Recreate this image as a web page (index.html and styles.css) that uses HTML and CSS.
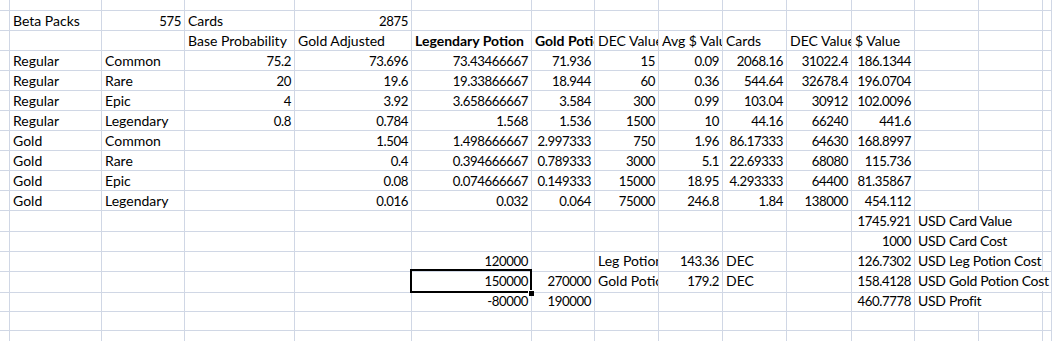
FILE: index.html
```html
<!DOCTYPE html>
<html>
<head>
<meta charset="utf-8">
<link rel="stylesheet" href="styles.css">
</head>
<body>
<div class="sheet">
  <div class="r top"><div class="c"></div><div class="c"></div><div class="c"></div><div class="c"></div><div class="c"></div><div class="c"></div><div class="c"></div><div class="c"></div><div class="c"></div><div class="c"></div><div class="c"></div><div class="c"></div><div class="c"></div><div class="c"></div><div class="c"></div></div>
  <div class="r"><div class="c"></div><div class="c">Beta Packs</div><div class="c n">575</div><div class="c">Cards</div><div class="c n">2875</div><div class="c"></div><div class="c"></div><div class="c"></div><div class="c"></div><div class="c"></div><div class="c"></div><div class="c"></div><div class="c"></div><div class="c"></div><div class="c"></div></div>
  <div class="r"><div class="c"></div><div class="c"></div><div class="c"></div><div class="c">Base Probability</div><div class="c">Gold Adjusted</div><div class="c b">Legendary Potion</div><div class="c b">Gold Potion</div><div class="c">DEC Value</div><div class="c">Avg $ Value</div><div class="c">Cards</div><div class="c">DEC Value</div><div class="c">$ Value</div><div class="c"></div><div class="c"></div><div class="c"></div></div>
  <div class="r"><div class="c"></div><div class="c">Regular</div><div class="c">Common</div><div class="c n">75.2</div><div class="c n">73.696</div><div class="c n">73.43466667</div><div class="c n">71.936</div><div class="c n">15</div><div class="c n">0.09</div><div class="c n">2068.16</div><div class="c n">31022.4</div><div class="c n">186.1344</div><div class="c"></div><div class="c"></div><div class="c"></div></div>
  <div class="r"><div class="c"></div><div class="c">Regular</div><div class="c">Rare</div><div class="c n">20</div><div class="c n">19.6</div><div class="c n">19.33866667</div><div class="c n">18.944</div><div class="c n">60</div><div class="c n">0.36</div><div class="c n">544.64</div><div class="c n">32678.4</div><div class="c n">196.0704</div><div class="c"></div><div class="c"></div><div class="c"></div></div>
  <div class="r"><div class="c"></div><div class="c">Regular</div><div class="c">Epic</div><div class="c n">4</div><div class="c n">3.92</div><div class="c n">3.658666667</div><div class="c n">3.584</div><div class="c n">300</div><div class="c n">0.99</div><div class="c n">103.04</div><div class="c n">30912</div><div class="c n">102.0096</div><div class="c"></div><div class="c"></div><div class="c"></div></div>
  <div class="r"><div class="c"></div><div class="c">Regular</div><div class="c">Legendary</div><div class="c n">0.8</div><div class="c n">0.784</div><div class="c n">1.568</div><div class="c n">1.536</div><div class="c n">1500</div><div class="c n">10</div><div class="c n">44.16</div><div class="c n">66240</div><div class="c n">441.6</div><div class="c"></div><div class="c"></div><div class="c"></div></div>
  <div class="r"><div class="c"></div><div class="c">Gold</div><div class="c">Common</div><div class="c"></div><div class="c n">1.504</div><div class="c n">1.498666667</div><div class="c n">2.997333</div><div class="c n">750</div><div class="c n">1.96</div><div class="c n">86.17333</div><div class="c n">64630</div><div class="c n">168.8997</div><div class="c"></div><div class="c"></div><div class="c"></div></div>
  <div class="r"><div class="c"></div><div class="c">Gold</div><div class="c">Rare</div><div class="c"></div><div class="c n">0.4</div><div class="c n">0.394666667</div><div class="c n">0.789333</div><div class="c n">3000</div><div class="c n">5.1</div><div class="c n">22.69333</div><div class="c n">68080</div><div class="c n">115.736</div><div class="c"></div><div class="c"></div><div class="c"></div></div>
  <div class="r"><div class="c"></div><div class="c">Gold</div><div class="c">Epic</div><div class="c"></div><div class="c n">0.08</div><div class="c n">0.074666667</div><div class="c n">0.149333</div><div class="c n">15000</div><div class="c n">18.95</div><div class="c n">4.293333</div><div class="c n">64400</div><div class="c n">81.35867</div><div class="c"></div><div class="c"></div><div class="c"></div></div>
  <div class="r"><div class="c"></div><div class="c">Gold</div><div class="c">Legendary</div><div class="c"></div><div class="c n">0.016</div><div class="c n">0.032</div><div class="c n">0.064</div><div class="c n">75000</div><div class="c n">246.8</div><div class="c n">1.84</div><div class="c n">138000</div><div class="c n">454.112</div><div class="c"></div><div class="c"></div><div class="c"></div></div>
  <div class="r"><div class="c"></div><div class="c"></div><div class="c"></div><div class="c"></div><div class="c"></div><div class="c"></div><div class="c"></div><div class="c"></div><div class="c"></div><div class="c"></div><div class="c"></div><div class="c n">1745.921</div><div class="c ov">USD Card Value</div><div class="c"></div><div class="c"></div></div>
  <div class="r"><div class="c"></div><div class="c"></div><div class="c"></div><div class="c"></div><div class="c"></div><div class="c"></div><div class="c"></div><div class="c"></div><div class="c"></div><div class="c"></div><div class="c"></div><div class="c n">1000</div><div class="c ov">USD Card Cost</div><div class="c"></div><div class="c"></div></div>
  <div class="r"><div class="c"></div><div class="c"></div><div class="c"></div><div class="c"></div><div class="c"></div><div class="c n">120000</div><div class="c"></div><div class="c">Leg Potion</div><div class="c n">143.36</div><div class="c">DEC</div><div class="c"></div><div class="c n">126.7302</div><div class="c ov">USD Leg Potion Cost</div><div class="c"></div><div class="c"></div></div>
  <div class="r"><div class="c"></div><div class="c"></div><div class="c"></div><div class="c"></div><div class="c"></div><div class="c n sel">150000</div><div class="c n">270000</div><div class="c">Gold Potion</div><div class="c n">179.2</div><div class="c">DEC</div><div class="c"></div><div class="c n">158.4128</div><div class="c ov">USD Gold Potion Cost</div><div class="c nr"></div><div class="c"></div></div>
  <div class="r"><div class="c"></div><div class="c"></div><div class="c"></div><div class="c"></div><div class="c"></div><div class="c n">-80000</div><div class="c n">190000</div><div class="c"></div><div class="c"></div><div class="c"></div><div class="c"></div><div class="c n">460.7778</div><div class="c ov">USD Profit</div><div class="c"></div><div class="c"></div></div>
  <div class="r"><div class="c"></div><div class="c"></div><div class="c"></div><div class="c"></div><div class="c"></div><div class="c"></div><div class="c"></div><div class="c"></div><div class="c"></div><div class="c"></div><div class="c"></div><div class="c"></div><div class="c"></div><div class="c"></div><div class="c"></div></div>
  <div class="r"><div class="c"></div><div class="c"></div><div class="c"></div><div class="c"></div><div class="c"></div><div class="c"></div><div class="c"></div><div class="c"></div><div class="c"></div><div class="c"></div><div class="c"></div><div class="c"></div><div class="c"></div><div class="c"></div><div class="c"></div></div>
</div>
</body>
</html>
```
FILE: styles.css
```css
html, body {
  margin: 0;
  padding: 0;
  background: #ffffff;
  overflow: hidden;
}
.sheet {
  width: 1052px;
  height: 341px;
  overflow: hidden;
  font-family: Lato, "Liberation Sans", sans-serif;
  font-size: 14px;
  color: #000000;
}
.r {
  display: grid;
  grid-template-columns: 10px 92px 83px 110px 117px 120px 63px 64px 64px 64px 65px 63px 64px 64px 1fr;
  height: 20px;
}
.r.top {
  height: 11px;
}
.c {
  box-sizing: border-box;
  border-right: 1px solid #d0d7e5;
  border-bottom: 1px solid #d0d7e5;
  padding: 0 2px 0 3px;
  line-height: 20px;
  white-space: nowrap;
  overflow: hidden;
}
.n {
  text-align: right;
  font-size: 13.2px;
  line-height: 20.5px;
  padding-right: 3px;
  letter-spacing: -0.4px;
}
.b {
  font-weight: 700;
}
.ov {
  overflow: visible;
  border-right-color: transparent;
  letter-spacing: -0.3px;
}
.nr {
  border-right-color: transparent;
}
.sel {
  position: relative;
  overflow: visible;
}
.sel::before {
  content: "";
  position: absolute;
  left: -2px;
  top: -2px;
  right: -1px;
  bottom: -1px;
  border: 2px solid #000000;
  pointer-events: none;
}
.sel::after {
  content: "";
  position: absolute;
  right: -3px;
  bottom: -4px;
  width: 5px;
  height: 5px;
  background: #000000;
  border-left: 1px solid #ffffff;
  border-top: 1px solid #ffffff;
}
```
